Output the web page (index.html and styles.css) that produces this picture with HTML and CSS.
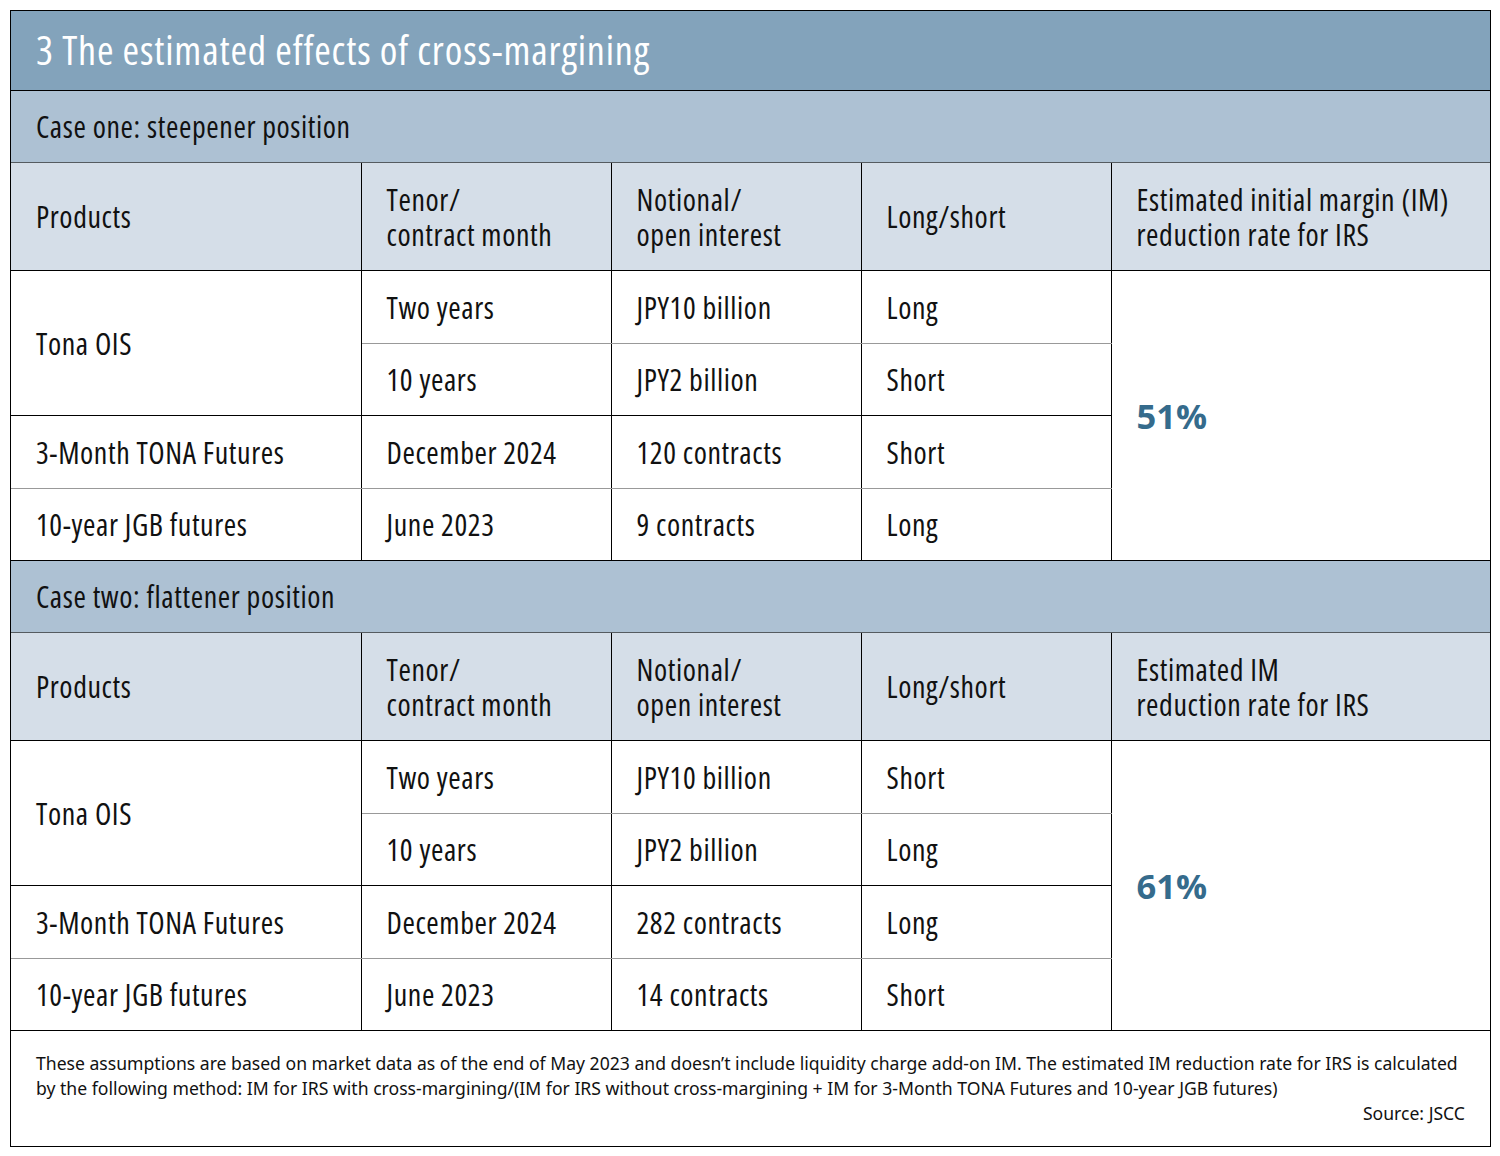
FILE: index.html
```html
<!DOCTYPE html>
<html>
<head>
<meta charset="utf-8">
<link rel="stylesheet" href="styles.css">
</head>
<body>
<div class="card">
  <div class="title">3 The estimated effects of cross-margining</div>
  <table class="grid">
    <colgroup>
      <col class="c1"><col class="c2"><col class="c3"><col class="c4"><col class="c5">
    </colgroup>
    <tr class="section"><td colspan="5">Case one: steepener position</td></tr>
    <tr class="head">
      <td>Products</td>
      <td><span class="ln">Tenor/</span><span class="ln">contract month</span></td>
      <td><span class="ln">Notional/</span><span class="ln">open interest</span></td>
      <td>Long/short</td>
      <td class="last"><span class="ln">Estimated initial margin (IM)</span><span class="ln">reduction rate for IRS</span></td>
    </tr>
    <tr class="row thin">
      <td rowspan="2" class="dark">Tona OIS</td>
      <td class="light">Two years</td>
      <td class="light">JPY10 billion</td>
      <td class="light">Long</td>
      <td rowspan="4" class="pct last">51%</td>
    </tr>
    <tr class="row">
      <td>10 years</td>
      <td>JPY2 billion</td>
      <td>Short</td>
    </tr>
    <tr class="row thin">
      <td class="light">3-Month TONA Futures</td>
      <td class="light">December 2024</td>
      <td class="light">120 contracts</td>
      <td class="light">Short</td>
    </tr>
    <tr class="row">
      <td>10-year JGB futures</td>
      <td>June 2023</td>
      <td>9 contracts</td>
      <td>Long</td>
    </tr>
    <tr class="section"><td colspan="5">Case two: flattener position</td></tr>
    <tr class="head">
      <td>Products</td>
      <td><span class="ln">Tenor/</span><span class="ln">contract month</span></td>
      <td><span class="ln">Notional/</span><span class="ln">open interest</span></td>
      <td>Long/short</td>
      <td class="last"><span class="ln">Estimated IM</span><span class="ln">reduction rate for IRS</span></td>
    </tr>
    <tr class="row thin">
      <td rowspan="2" class="dark">Tona OIS</td>
      <td class="light">Two years</td>
      <td class="light">JPY10 billion</td>
      <td class="light">Short</td>
      <td rowspan="4" class="pct last">61%</td>
    </tr>
    <tr class="row">
      <td>10 years</td>
      <td>JPY2 billion</td>
      <td>Long</td>
    </tr>
    <tr class="row thin">
      <td class="light">3-Month TONA Futures</td>
      <td class="light">December 2024</td>
      <td class="light">282 contracts</td>
      <td class="light">Long</td>
    </tr>
    <tr class="row">
      <td>10-year JGB futures</td>
      <td>June 2023</td>
      <td>14 contracts</td>
      <td>Short</td>
    </tr>
  </table>
  <div class="note">
    <p>These assumptions are based on market data as of the end of May 2023 and doesn’t include liquidity charge add-on IM. The estimated IM reduction rate for IRS is calculated by the following method: IM for IRS with cross-margining/(IM for IRS without cross-margining + IM for 3-Month TONA Futures and 10-year JGB futures)</p>
    <p class="source">Source: JSCC</p>
  </div>
</div>
</body>
</html>
```

FILE: styles.css
```css
html, body {
  margin: 0;
  padding: 0;
  background: #ffffff;
}
body {
  padding: 10px;
  font-family: "Open Sans", "Noto Sans", sans-serif;
  font-stretch: 75%;
  color: #111111;
}
.card {
  width: 1479px;
  border: 1px solid #000000;
  box-sizing: content-box;
}
.title {
  box-sizing: border-box;
  height: 80px;
  background: #83a3bb;
  color: #ffffff;
  font-size: 40px;
  letter-spacing: 0.85px;
  line-height: 77px;
  padding-left: 25px;
  border-bottom: 1px solid #000000;
}
.grid {
  width: 100%;
  border-collapse: collapse;
  table-layout: fixed;
}
.c1 { width: 350px; }
.c2 { width: 250px; }
.c3 { width: 250px; }
.c4 { width: 250px; }
.c5 { width: 379px; }
.grid td {
  padding: 0 0 0 25px;
  font-size: 30px;
  letter-spacing: 0.6px;
  border-right: 1px solid #000000;
  border-bottom: 1px solid #000000;
  vertical-align: middle;
  line-height: 35px;
  white-space: nowrap;
}
.ln {
  display: block;
  height: 35px;
}
.grid td.last {
  border-right: none;
}
.section td {
  background: #adc1d3;
  height: 71px;
  border-bottom: 1px solid #555b60;
  border-right: none;
}
.head td {
  background: #d5dee8;
  height: 107px;
}
.row td {
  height: 71px;
  background: #ffffff;
}
.row.thin td {
  height: 72px;
}
.grid td.light {
  border-bottom: 1px solid #999999;
}
.grid td.pct {
  font-stretch: 100%;
  font-weight: 700;
  font-size: 34.5px;
  letter-spacing: 0;
  color: #356b8c;
  border-bottom: 1px solid #000000;
}
.note {
  border-top: 1px solid #000000;
  margin-top: -1px;
  padding: 20px 25px 20px 25px;
  font-family: "Noto Sans", "Open Sans", sans-serif;
  font-stretch: 100%;
  font-size: 17.6px;
  line-height: 25px;
  color: #111111;
}
.note p {
  margin: 0;
}
.note .source {
  text-align: right;
}
```
